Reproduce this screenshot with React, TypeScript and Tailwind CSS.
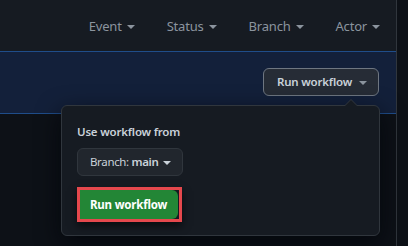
import React from "react";

const Caret = ({ className = "" }: { className?: string }) => (
  <svg width="8" height="4" viewBox="0 0 8 4" className={className}>
    <path d="M0 0 L8 0 L4 4 Z" fill="currentColor" />
  </svg>
);

const FilterItem = ({ label }: { label: string }) => (
  <div className="flex items-center gap-[5px] text-[#8b949e] text-[13px] tracking-[-0.2px] leading-[20px]">
    <span>{label}</span>
    <Caret className="mt-[2px]" />
  </div>
);

export default function App() {
  return (
    <div
      className="relative w-[408px] h-[246px] overflow-hidden flex bg-[#0d1117]"
      style={{ fontFamily: '"Noto Sans", "Liberation Sans", sans-serif' }}
    >
      <div className="w-[396px] flex flex-col">
        <div className="h-[51px] bg-[#161b22] flex items-center justify-end gap-8 pr-4 pt-[1px] shrink-0">
          <FilterItem label="Event" />
          <FilterItem label="Status" />
          <FilterItem label="Branch" />
          <FilterItem label="Actor" />
        </div>
        <div className="h-[63px] border-y border-[#1f4d8a] bg-[#13203a] flex items-start justify-end pr-[17px] pt-[16px] shrink-0">
          <div className="h-[28px] w-[116px] pl-[13px] flex items-center gap-[7px] rounded-md border border-[#6e7681] bg-[#262c36] text-[#c9d1d9] text-[11.5px] tracking-[-0.2px] font-semibold">
            <span>Run workflow</span>
            <Caret className="text-[#8b949e] mt-[1px]" />
          </div>
        </div>
        <div className="flex-1 bg-[#0d1117]" />
      </div>
      <div className="w-px bg-[#30363d]" />
      <div className="flex-1 bg-[#0d1117]" />

      {/* popover */}
      <div className="absolute left-[61px] top-[105px] w-[319px] h-[131px] rounded-md border border-[#30363d] bg-[#161b22] shadow-[0_8px_24px_rgba(1,4,9,0.75)] pl-[15px] pt-[17px]">
        <div className="absolute -top-[7px] left-[282px] w-0 h-0 border-l-[7px] border-r-[7px] border-b-[7px] border-l-transparent border-r-transparent border-b-[#30363d]" />
        <div className="absolute -top-[6px] left-[283px] w-0 h-0 border-l-[6px] border-r-[6px] border-b-[6px] border-l-transparent border-r-transparent border-b-[#161b22]" />
        <div className="text-[11.5px] tracking-[-0.2px] leading-[18px] font-semibold text-[#c9d1d9]">Use workflow from</div>
        <div className="mt-[7px] h-[28px] w-[106px] rounded-md border border-[#30363d] bg-[#21262d] flex items-center pl-[12px] gap-[5px] text-[11.5px] tracking-[-0.35px] text-[#c9d1d9]">
          <span>
            Branch: <span className="font-semibold">main</span>
          </span>
          <Caret className="mt-[1px]" />
        </div>
        <div className="mt-[11px] w-[105px] h-[35px] border-[3px] border-[#e5484d] shadow-[0_4px_8px_rgba(0,0,0,0.6)] bg-[#161b22]">
          <div className="h-full w-[98px] rounded-r-md bg-[#238636] flex items-center pl-[10px] text-white text-[11.5px] tracking-[-0.2px] font-bold">
            Run workflow
          </div>
        </div>
      </div>
    </div>
  );
}
